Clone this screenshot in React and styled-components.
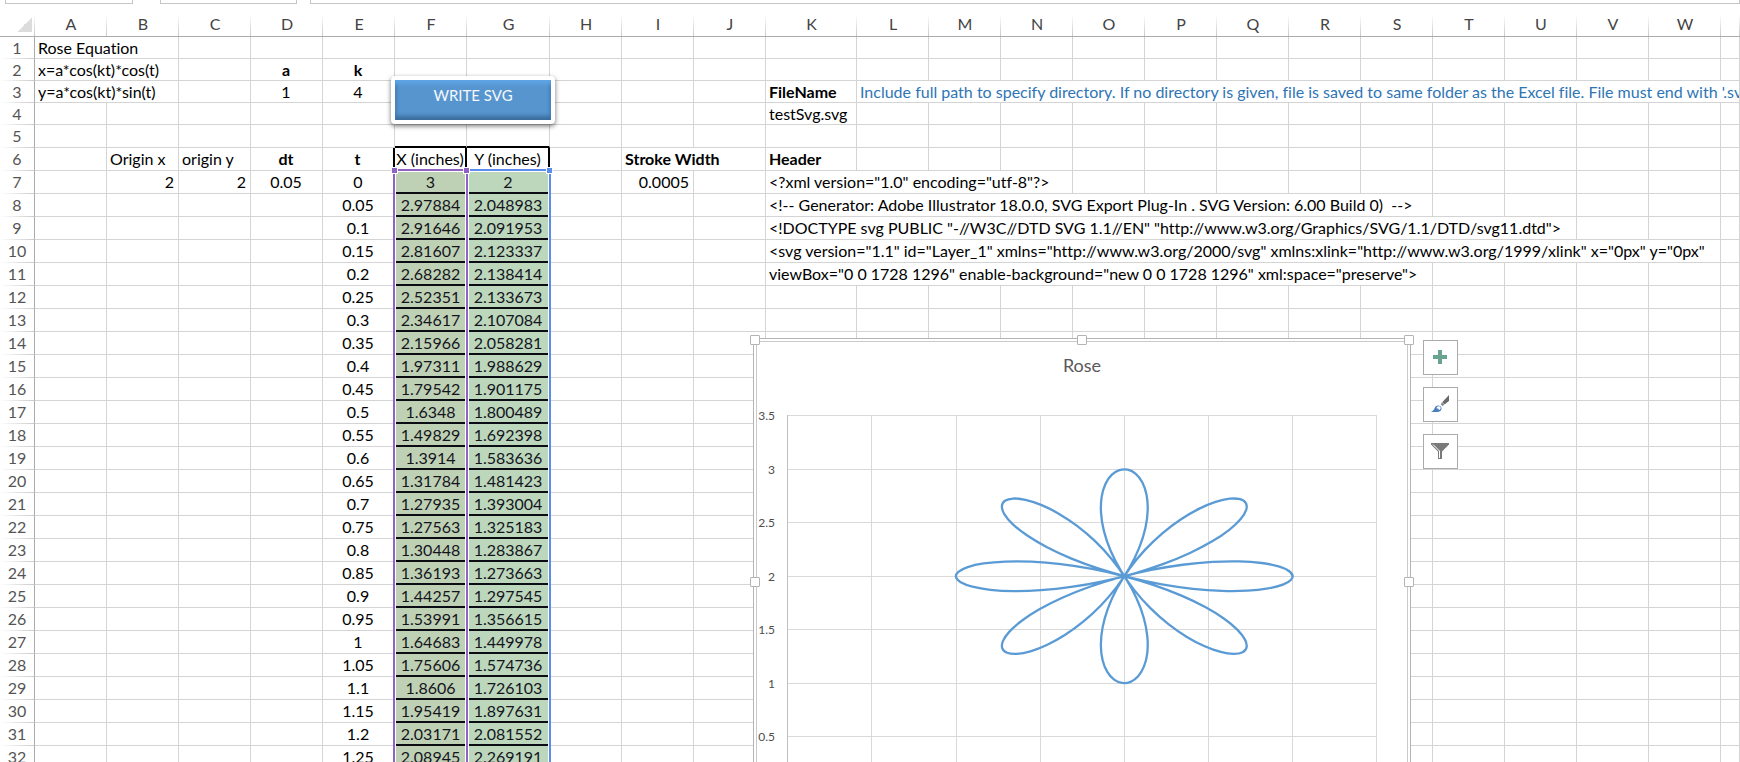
import styled, { createGlobalStyle } from "styled-components";

const GlobalStyle = createGlobalStyle`
  * {
    box-sizing: border-box;
  }

  body {
    margin: 0;
    background: #ffffff;
    color: #000000;
    font-family: Lato, "Liberation Sans", sans-serif;
    font-size: 16px;
    font-variant-ligatures: none;
    line-height: 20px;
  }
`;

const Workbook = styled.main`
  position: relative;
  height: 100vh;
  overflow: hidden;
`;

const FormulaBar = styled.div`
  display: flex;
  height: 4px;
  padding-left: 5px;
`;

const BarBox = styled.div`
  width: ${(props) => props.$width}px;
  flex-grow: ${(props) => (props.$grow ? 1 : 0)};
  margin-right: ${(props) => props.$gap}px;
  border: 1px solid #c6c6c6;
  border-top: 0;
`;

const Sheet = styled.table`
  width: 100%;
  table-layout: fixed;
  border-collapse: separate;
  border-spacing: 0;
`;

const ColumnHead = styled.th`
  height: 33px;
  padding: 7px 0 0;
  border-bottom: 1px solid #ababab;
  background: linear-gradient(#ffffff, #c9c9c9) right bottom / 1px 22px
    no-repeat;
  color: #444444;
  font-weight: 400;
`;

const Corner = styled(ColumnHead)`
  padding: 0 3px 4px 0;
  vertical-align: bottom;
`;

const CornerMark = styled.div`
  width: 15px;
  height: 15px;
  margin-left: auto;
  background: linear-gradient(135deg, transparent 50%, #dcdcdc 50%);
`;

const Row = styled.tr`
  height: ${(props) => (props.$short ? 22 : 23)}px;
`;

const RowHead = styled.th`
  padding: 0;
  border-right: 1px solid #ababab;
  border-bottom: 1px solid transparent;
  background: linear-gradient(to right, #ffffff, #c9c9c9) left bottom / 100% 1px
    no-repeat border-box;
  color: #555555;
  font-weight: 400;
  vertical-align: middle;
`;

const Cell = styled.td`
  padding: 0 4px 0 3px;
  border-right: ${(props) => (props.$boxRight ? "2px solid #000" : "1px solid #d4d4d4")};
  border-bottom: ${(props) => (props.$boxBottom ? "2px solid #000" : "1px solid #d4d4d4")};
  color: ${(props) => (props.$note ? "#2e75b6" : "inherit")};
  font-weight: ${(props) => (props.$bold ? 700 : 400)};
  text-align: ${(props) => props.$align || "left"};
  vertical-align: middle;
  white-space: pre;
  overflow: hidden;
`;

const DataCell = styled(Cell)`
  padding: 0;
  border-bottom: 2px solid #0c0c14;
  background: ${(props) => (props.$series === "x" ? "#bfd1b4" : "#bcd7bb")};
  color: #14141e;
  text-align: center;
`;

const HeadingCell = styled(Cell)`
  padding: 0;
  border-right: 2px solid #000000;
  text-align: center;
`;

// The ranges, button and chart float over the grid
const Range = styled.div`
  position: absolute;
  top: 169px;
  bottom: -10px;
  left: ${(props) => props.$left}px;
  width: ${(props) => props.$width}px;
  display: flex;
  justify-content: ${(props) => (props.$single ? "flex-end" : "space-between")};
  border: 2px solid ${(props) => props.$color};
  box-shadow: inset 0 0 0 1px #ffffff;
  pointer-events: none;
`;

const RangeGrip = styled.span`
  width: 7px;
  height: 7px;
  margin: -4px -4px 0;
  border: 1px solid #ffffff;
  background: ${(props) => props.$color};
`;

const WriteButton = styled.button`
  position: absolute;
  top: 76px;
  left: 391px;
  width: 164px;
  height: 48px;
  padding: 0 0 10px;
  border: 4px solid #ffffff;
  border-radius: 4px;
  background: #5795cf;
  box-shadow:
    0 2px 5px rgba(0, 0, 0, 0.55),
    inset 0 6px 4px -2px #5ea5e6,
    inset 0 -6px 4px -2px #396c9c,
    inset 4px 0 3px -2px #4580b6,
    inset -4px 0 3px -2px #4580b6;
  color: #f4f8fc;
  font: inherit;
  font-size: 15px;
`;

const ChartObject = styled.div`
  position: absolute;
  top: 338px;
  left: 753px;
  display: flex;
  align-items: flex-start;
  gap: 12px;
`;

const ChartFrame = styled.section`
  position: relative;
  border: 1px solid #b4b4b4;
  background: #ffffff;
  box-shadow: inset 0 0 0 2px #ffffff, inset 0 0 0 3px #cacaca;
`;

const ChartTitle = styled.h2`
  margin: 0;
  padding: 16px 0 1px;
  color: #595959;
  font-size: 18px;
  font-weight: 400;
  text-align: center;
`;

const Plot = styled.svg`
  display: block;
`;

const AxisLabel = styled.text`
  fill: #4d4d4d;
  font-size: 12px;
  text-anchor: end;
`;

const Handles = styled.div`
  position: absolute;
  inset: -4px;
  display: grid;
  grid-template-columns: repeat(3, auto);
  justify-content: space-between;
  align-content: space-between;
`;

const Handle = styled.span`
  width: 10px;
  height: 10px;
  border: 1px solid #b4b4b4;
  border-radius: 1px;
  background: #ffffff;
  visibility: ${(props) => (props.$hidden ? "hidden" : "visible")};
`;

const ChartTools = styled.div`
  display: flex;
  flex-direction: column;
  gap: 12px;
  padding-top: 2px;
`;

const ToolButton = styled.button`
  display: flex;
  align-items: center;
  justify-content: center;
  width: 35px;
  height: 35px;
  padding: 0 1px 1px 0;
  border: 1px solid #ababab;
  background: #ffffff;
`;

const columns = "ABCDEFGHIJKLMNOPQRSTUVWX".split("");
const columnWidths = { G: 83, K: 91 };

// span: how many columns a long text runs over
const cells = {
  A1: { text: "Rose Equation", span: 2 },
  A2: { text: "x=a*cos(kt)*cos(t)", span: 2 },
  A3: { text: "y=a*cos(kt)*sin(t)", span: 2 },
  D2: { text: "a", bold: true, align: "center" },
  E2: { text: "k", bold: true, align: "center" },
  D3: { text: "1", align: "center" },
  E3: { text: "4", align: "center" },
  K3: { text: "FileName", bold: true },
  L3: {
    text: "Include full path to specify directory. If no directory is given, file is saved to same folder as the Excel file. File must end with '.svg'",
    span: 13,
    note: true,
  },
  K4: { text: "testSvg.svg" },
  B6: { text: "Origin x" },
  C6: { text: "origin y" },
  D6: { text: "dt", bold: true, align: "center" },
  E6: { text: "t", bold: true, align: "center" },
  F6: { text: "X (inches)" },
  G6: { text: "Y (inches)" },
  I6: { text: "Stroke Width", bold: true, span: 2 },
  K6: { text: "Header", bold: true },
  B7: { text: "2", align: "right" },
  C7: { text: "2", align: "right" },
  D7: { text: "0.05", align: "center" },
  I7: { text: "0.0005", align: "right" },
  K7: { text: '<?xml version="1.0" encoding="utf-8"?>', span: 4 },
  K8: {
    text: "<!-- Generator: Adobe Illustrator 18.0.0, SVG Export Plug-In . SVG Version: 6.00 Build 0)  -->",
    span: 9,
  },
  K9: {
    text: '<!DOCTYPE svg PUBLIC "-//W3C//DTD SVG 1.1//EN" "http://www.w3.org/Graphics/SVG/1.1/DTD/svg11.dtd">',
    span: 11,
  },
  K10: {
    text: '<svg version="1.1" id="Layer_1" xmlns="http://www.w3.org/2000/svg" xmlns:xlink="http://www.w3.org/1999/xlink" x="0px" y="0px"',
    span: 13,
  },
  K11: {
    text: 'viewBox="0 0 1728 1296" enable-background="new 0 0 1728 1296" xml:space="preserve">',
    span: 9,
  },
};

const rose = (t) => ({
  x: 2 + Math.cos(4 * t) * Math.cos(t),
  y: 2 + Math.cos(4 * t) * Math.sin(t),
});

const rowNumbers = Array.from({ length: 32 }, (_, i) => i + 1);

rowNumbers
  .filter((row) => row >= 7)
  .forEach((row) => {
    const t = (row - 7) * 0.05;
    const point = rose(t);
    cells[`E${row}`] = { text: String(Number(t.toFixed(2))), align: "center" };
    cells[`F${row}`] = { text: String(Number(point.x.toFixed(5))), series: "x" };
    cells[`G${row}`] = { text: String(Number(point.y.toFixed(6))), series: "y" };
  });

function renderCells(row) {
  const result = [];
  for (let i = 0; i < columns.length; ) {
    const column = columns[i];
    const cell = cells[`${column}${row}`] || {};
    const key = `${column}${row}`;
    const span = cell.span || 1;

    if (cell.series) {
      result.push(
        <DataCell key={key} $series={cell.series}>
          {cell.text}
        </DataCell>
      );
    } else if (key === "F6" || key === "G6") {
      result.push(<HeadingCell key={key}>{cell.text}</HeadingCell>);
    } else {
      result.push(
        <Cell
          key={key}
          colSpan={span}
          $bold={cell.bold}
          $align={cell.align}
          $note={cell.note}
          $boxRight={key === "E6"}
          $boxBottom={key === "F5" || key === "G5"}
        >
          {cell.text}
        </Cell>
      );
    }
    i += span;
  }
  return result;
}

const toPlot = ({ x, y }) => [34.5 + x * 168.4, 452 - y * 106.9];

// Catmull-Rom segments through the sampled points
function rosePath() {
  const points = Array.from({ length: 128 }, (_, i) => toPlot(rose(i * 0.05)));
  let d = `M${points[0]}`;
  for (let i = 0; i < points.length - 1; i++) {
    const before = points[Math.max(i - 1, 0)];
    const from = points[i];
    const to = points[i + 1];
    const after = points[Math.min(i + 2, points.length - 1)];
    const c1 = from.map((v, axis) => v + (to[axis] - before[axis]) / 6);
    const c2 = to.map((v, axis) => v - (after[axis] - from[axis]) / 6);
    d += `C${c1} ${c2} ${to}`;
  }
  return d;
}

const gridX = [118, 203, 287, 371, 455, 539, 623];
const gridY = [
  { y: 77, label: "3.5" },
  { y: 131, label: "3" },
  { y: 184, label: "2.5" },
  { y: 238, label: "2" },
  { y: 291, label: "1.5" },
  { y: 345, label: "1" },
  { y: 398, label: "0.5" },
];

const handles = ["nw", "n", "ne", "w", "", "e", "sw", "s", "se"];

function RoseChart() {
  return (
    <ChartFrame>
      <ChartTitle>Rose</ChartTitle>
      <Plot width="656" height="449" viewBox="1 38 656 449">
        {gridY.map(({ y, label }) => (
          <g key={label}>
            <path d={`M34 ${y + 0.5}H624`} stroke="#d9d9d9" />
            <AxisLabel x="22" y={y + 5}>
              {label}
            </AxisLabel>
          </g>
        ))}
        {gridX.map((x) => (
          <path key={x} d={`M${x + 0.5} 77V452`} stroke="#d9d9d9" />
        ))}
        <path d="M34.5 77V452H624" fill="none" stroke="#bfbfbf" />
        <path
          d={rosePath()}
          fill="none"
          stroke="#5b9bd5"
          strokeWidth="2.3"
          strokeLinejoin="round"
        />
      </Plot>
      <Handles>
        {handles.map((side) => (
          <Handle key={side} $hidden={side === ""} />
        ))}
      </Handles>
    </ChartFrame>
  );
}

function PlusIcon() {
  return (
    <svg width="18" height="18" viewBox="0 0 18 18">
      <path d="M7 2h4v5h5v4h-5v5H7v-5H2V7h5z" fill="#68a490" />
    </svg>
  );
}

function BrushIcon() {
  return (
    <svg width="18" height="18" viewBox="0 0 18 18">
      <path d="M18 0V6L13.5 9.5L11.2 7.3Z" fill="#6a6a6a" />
      <path d="M11 7.6L13.2 9.6L11.6 11.2L9.6 9.3Z" fill="#8a8a8a" />
      <path
        d="M0 17C2.5 16 3 14.5 3.8 12.8C4.8 10.5 7.5 9.8 9.5 11.3C11.3 13 10.8 15.5 8.5 16.5C6.5 17.3 3 17 0 17Z"
        fill="#4a7ebb"
      />
      <path
        d="M5.8 11.9C7.4 10.9 9 11.3 9.6 12.5C9.9 13.8 9.2 14.8 7.8 15C7.9 13.8 7.2 13.4 5.8 13.4Z"
        fill="#ffffff"
      />
    </svg>
  );
}

function FunnelIcon() {
  return (
    <svg width="18" height="18" viewBox="0 0 18 18">
      <path d="M0 1H18V2.500L11 9.500V17H7V9.500L0 2.500Z" fill="#7a7a7a" />
      <path d="M2 2.500L8.500 9V16" fill="none" stroke="#ffffff" />
    </svg>
  );
}

export default function App() {
  return (
    <Workbook>
      <GlobalStyle />
      <FormulaBar>
        <BarBox $width={128} $gap={27} />
        <BarBox $width={137} $gap={13} />
        <BarBox $grow $gap={0} />
      </FormulaBar>

      <Sheet>
        <colgroup>
          <col width="35" />
          {columns.map((column) => (
            <col
              key={column}
              width={column === "X" ? undefined : columnWidths[column] || 72}
            />
          ))}
        </colgroup>
        <thead>
          <tr>
            <Corner>
              <CornerMark />
            </Corner>
            {columns.map((column) => (
              <ColumnHead key={column} scope="col">
                {column === "X" ? "" : column}
              </ColumnHead>
            ))}
          </tr>
        </thead>
        <tbody>
          {rowNumbers.map((row) => (
            <Row key={row} $short={row < 5}>
              <RowHead scope="row">{row}</RowHead>
              {renderCells(row)}
            </Row>
          ))}
        </tbody>
      </Sheet>

      <Range $single $left={466} $width={85} $color="#5b8def">
        <RangeGrip $color="#5b8def" />
      </Range>
      <Range $left={393} $width={75} $color="#8e63c5">
        <RangeGrip $color="#8e63c5" />
        <RangeGrip $color="#8e63c5" />
      </Range>

      <WriteButton type="button">WRITE SVG</WriteButton>

      <ChartObject>
        <RoseChart />
        <ChartTools>
          <ToolButton type="button" aria-label="Chart Elements">
            <PlusIcon />
          </ToolButton>
          <ToolButton type="button" aria-label="Chart Styles">
            <BrushIcon />
          </ToolButton>
          <ToolButton type="button" aria-label="Chart Filters">
            <FunnelIcon />
          </ToolButton>
        </ChartTools>
      </ChartObject>
    </Workbook>
  );
}
